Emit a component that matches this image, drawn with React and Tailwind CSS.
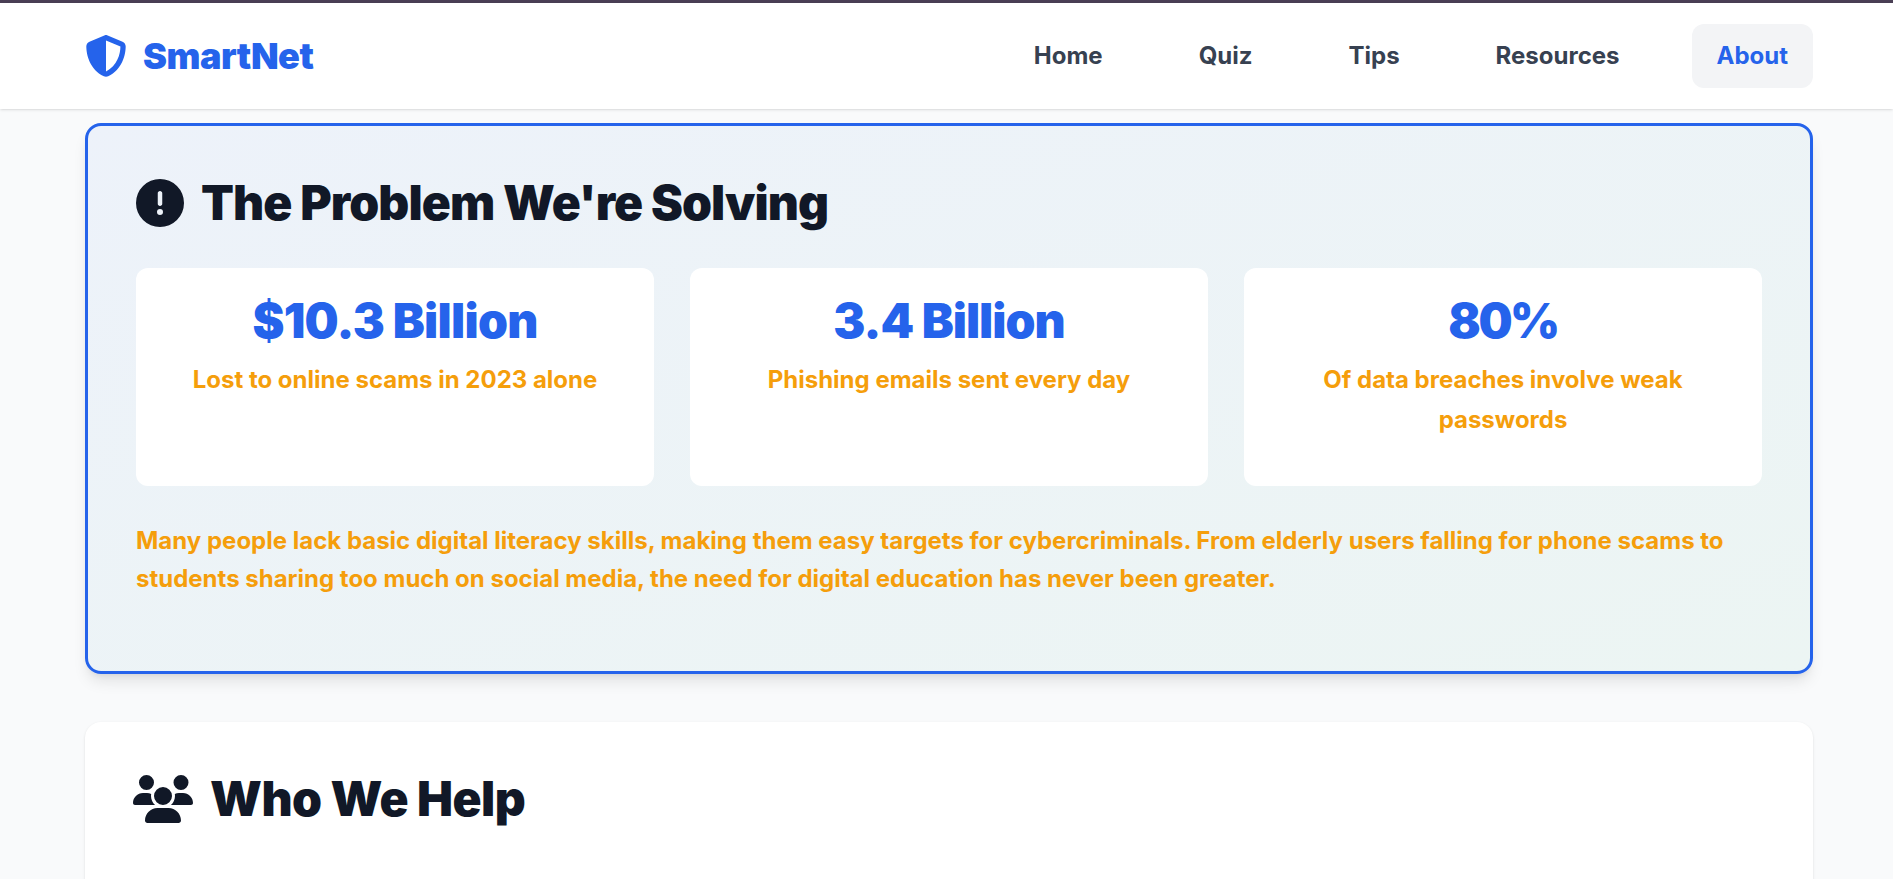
import React from 'react';
import { FaCircleExclamation, FaShieldHalved, FaUsers } from 'react-icons/fa6';

const navLinks = ['Home', 'Quiz', 'Tips', 'Resources'];

const stats = [
  { value: '$10.3 Billion', tracking: 'tracking-[-0.75px]', label: 'Lost to online scams in 2023 alone' },
  { value: '3.4 Billion', tracking: 'tracking-[-1px]', label: 'Phishing emails sent every day' },
  { value: '80%', tracking: 'tracking-[-2.5px]', label: 'Of data breaches involve weak passwords' },
];

const StatCard = ({ value, tracking, label }) => (
  <div className="bg-white rounded-xl px-6 pt-[23px] h-[218px] text-center">
    <div className={`text-[48px] leading-[60px] font-black text-[#2563eb] ${tracking}`}>{value}</div>
    <div className="mt-[9px] text-[24px] leading-[40px] font-bold text-[#f59e0b]">{label}</div>
  </div>
);

export default function App() {
  return (
    <div className="h-[879px] overflow-hidden bg-[#f9fafb] font-['Inter',sans-serif]">
      <div className="h-[3px] bg-[#4a3f55]" />
      <nav className="h-[106px] bg-white shadow-sm flex items-center justify-between pl-[85px] pr-[80px]">
        <div className="flex items-center gap-[16px] text-[#2563eb]">
          <FaShieldHalved className="w-[42px] h-[42px]" />
          <span className="text-[36px] font-black tracking-[-0.5px] leading-none">SmartNet</span>
        </div>
        <div className="flex items-center gap-[48px]">
          {navLinks.map((link) => (
            <a key={link} className="px-6 py-[16px] rounded-xl text-[24px] leading-[32px] font-bold text-[#374151]">{link}</a>
          ))}
          <a className="px-[25px] py-[16px] rounded-xl bg-[#f3f4f6] text-[24px] leading-[32px] font-bold text-[#2563eb]">About</a>
        </div>
      </nav>

      <main className="pl-[85px] pr-[80px] pt-[14px]">
        <section className="h-[551px] rounded-2xl border-[3px] border-[#2563eb] bg-gradient-to-br from-[#edf2fa] to-[#ecf5f3] shadow-lg px-[48px] pt-[48px]">
          <h2 className="flex items-center gap-[17px] text-[48px] leading-[58px] font-black tracking-[-0.9px] text-[#111827]">
            <FaCircleExclamation className="w-[48px] h-[48px]" />
            The Problem We're Solving
          </h2>
          <div className="mt-[36px] grid grid-cols-3 gap-[36px]">
            {stats.map((s) => (
              <StatCard key={s.value} value={s.value} tracking={s.tracking} label={s.label} />
            ))}
          </div>
          <p className="mt-[36px] text-[24px] leading-[38.4px] font-bold text-[#f59e0b]">
            Many people lack basic digital literacy skills, making them easy targets for cybercriminals. From elderly users falling for phone scams to students sharing too much on social media, the need for digital education has never been greater.
          </p>
        </section>

        <section className="mt-[48px] h-[400px] rounded-2xl bg-white shadow-sm px-[48px] pt-[48px]">
          <h2 className="flex items-center gap-[17px] text-[48px] leading-[58px] font-black tracking-[-0.55px] text-[#111827]">
            <FaUsers className="w-[60px] h-[48px]" />
            Who We Help
          </h2>
        </section>
      </main>
    </div>
  );
}
